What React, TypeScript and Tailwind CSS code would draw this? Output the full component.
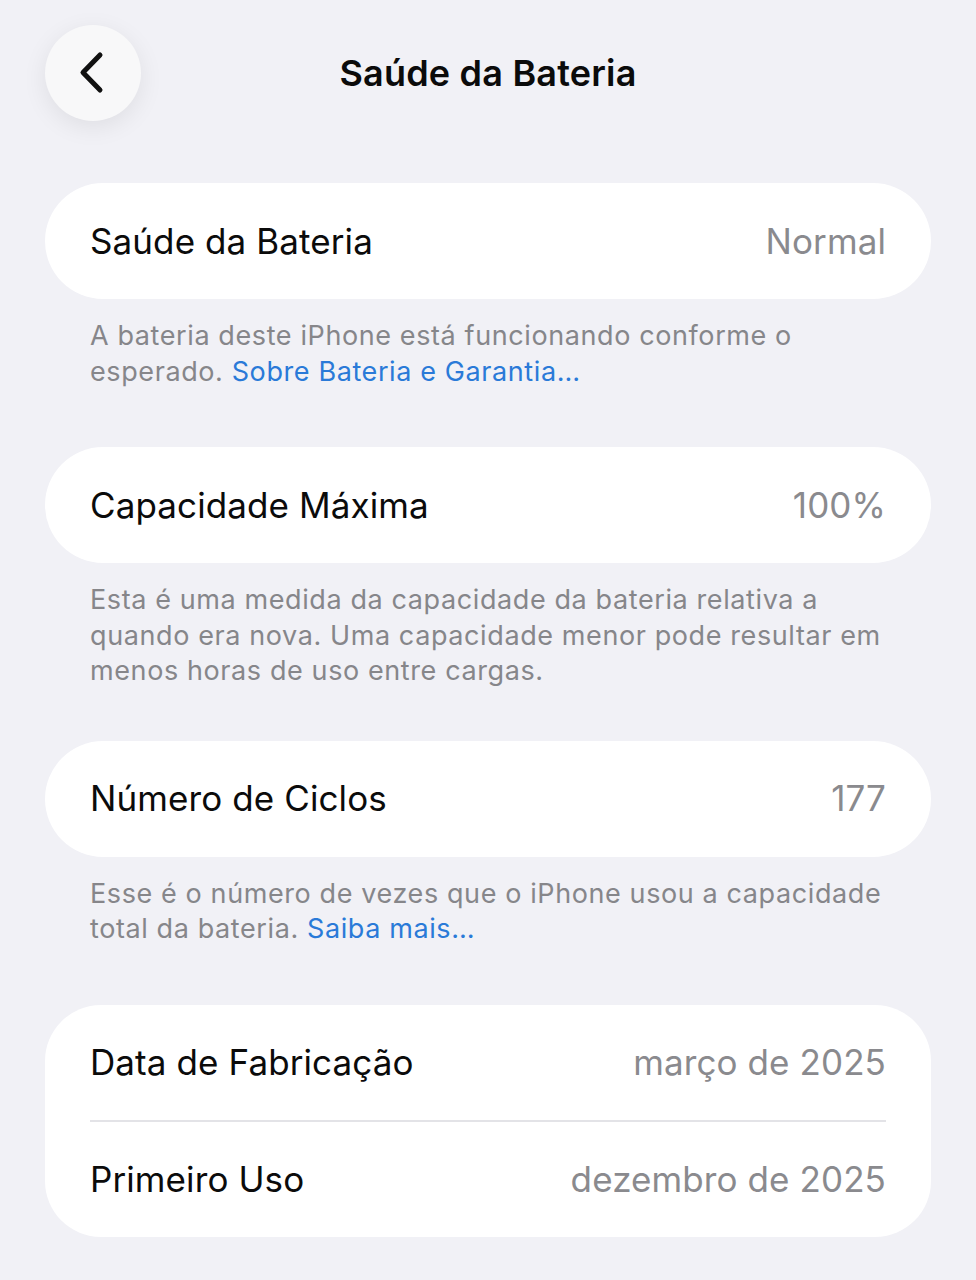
import React from "react";

const font = { fontFamily: "Inter, 'Noto Sans', sans-serif" };

const Row = ({ label, value, h = "h-[116px]" }: { label: string; value: string; h?: string }) => (
  <div className={`flex ${h} items-center justify-between`}>
    <span className="text-[35px] tracking-[0.1px] text-[#0b0b0b]">{label}</span>
    <span className="text-[35px] tracking-[0.1px] text-[#8a8a8e]">{value}</span>
  </div>
);

const App = () => {
  const sections = [
    {
      label: "Saúde da Bateria",
      value: "Normal",
      note: "A bateria deste iPhone está funcionando conforme o esperado. ",
      link: "Sobre Bateria e Garantia…",
      gap: "mb-[58px]",
    },
    {
      label: "Capacidade Máxima",
      value: "100%",
      note: "Esta é uma medida da capacidade da bateria relativa a quando era nova. Uma capacidade menor pode resultar em menos horas de uso entre cargas.",
      link: "",
      gap: "mb-[52px]",
    },
    {
      label: "Número de Ciclos",
      value: "177",
      note: "Esse é o número de vezes que o iPhone usou a capacidade total da bateria. ",
      link: "Saiba mais…",
      gap: "mb-[58px]",
    },
  ];

  return (
    <div className="min-h-[1280px] w-[976px] bg-[#f1f1f6] px-[45px]" style={font}>
      {/* header */}
      <div className="relative flex h-[146px] items-start pt-[25px]">
        <button className="flex h-[96px] w-[96px] items-center justify-center rounded-full bg-[#f8f8f9] shadow-[0_6px_24px_rgba(0,0,0,0.08)]">
          <svg width="34" height="44" viewBox="0 0 34 44" fill="none">
            <path d="M24 4 L7 21.5 L24 39" stroke="#111" strokeWidth="5" strokeLinecap="round" strokeLinejoin="round" />
          </svg>
        </button>
        <h1 className="absolute left-0 right-0 top-[49px] text-center text-[36px] font-semibold leading-[48px] tracking-[0.2px] text-[#0b0b0b]">
          Saúde da Bateria
        </h1>
      </div>

      <div className="mt-[37px]">
        {sections.map((s, i) => (
          <div key={i} className={s.gap}>
            <div className="rounded-[58px] bg-white px-[45px]">
              <Row label={s.label} value={s.value} />
            </div>
            <p className="mt-[19px] pl-[45px] pr-[25px] text-[27px] leading-[35.5px] tracking-[0.6px] text-[#86868a]">
              {s.note}
              {s.link && <span className="text-[#2a7ad8]">{s.link}</span>}
            </p>
          </div>
        ))}

        <div className="rounded-[56px] bg-white px-[45px]">
          <Row label="Data de Fabricação" value="março de 2025" h="h-[115px]" />
          <div className="h-[2px] bg-[#e3e3e7]" />
          <Row label="Primeiro Uso" value="dezembro de 2025" h="h-[115px]" />
        </div>
      </div>
    </div>
  );
};

export default App;
